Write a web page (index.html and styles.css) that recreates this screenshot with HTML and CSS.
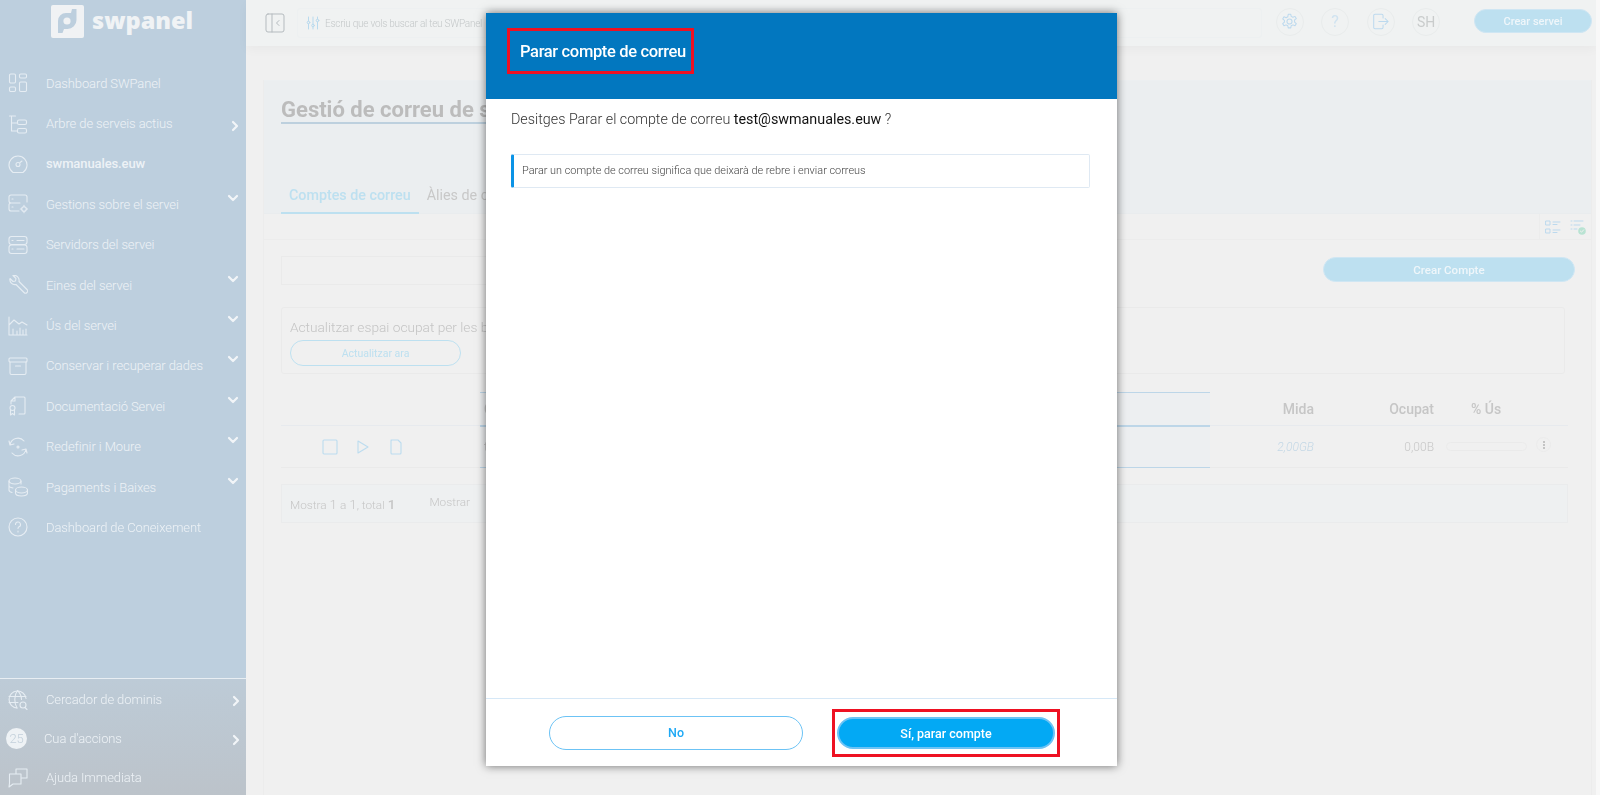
FILE: index.html
```html
<!DOCTYPE html>
<html lang="ca">
<head>
    <meta charset="UTF-8">
    <meta name="viewport" content="width=device-width, initial-scale=1.0">
    <title>SWPanel</title>
    <link rel="stylesheet" href="styles.css">
</head>
<body>
    <div class="page">
        <!-- sidebar -->
        <aside class="sidebar">
            <div class="logo">
                <span class="logo-mark">
                    <svg viewBox="0 0 33 33" width="33" height="33"><path d="M25.500 4v11a9 9 0 0 1-9 9H13l-1.500 4H7V16a8 8 0 0 1 8-8h5l1-4z" fill="#bdcfde"/><circle cx="16" cy="16" r="3.600" fill="#f0f2f4"/></svg>
                </span>
                <span class="logo-text">swpanel</span>
            </div>
            <nav class="side-nav">
                <a class="side-item">
                    <svg class="side-icon" viewBox="0 0 20 20"><rect x="1.500" y="1" width="6" height="9" rx="1.200"/><rect x="11.500" y="1" width="7" height="4" rx="1.200"/><rect x="1.500" y="14" width="6" height="4.500" rx="1.200"/><rect x="11.500" y="9" width="7" height="9.500" rx="1.200"/></svg>
                    <span>Dashboard SWPanel</span>
                </a>
                <a class="side-item">
                    <svg class="side-icon" viewBox="0 0 20 20"><path d="M1.500 2h6M3.500 2v15h5.500M3.500 9h5.500"/><rect x="9.500" y="6" width="9" height="4.500" rx="1.500"/><rect x="9.500" y="14.500" width="9" height="4.500" rx="1.500"/></svg>
                    <span>Arbre de serveis actius</span>
                    <svg class="chev-right" viewBox="0 0 10 12"><path d="M3 2l4 4-4 4"/></svg>
                </a>
                <a class="side-item side-item-current">
                    <svg class="side-icon" viewBox="0 0 20 20"><path d="M5 18.500a9 9 0 1 1 10 0z"/><circle cx="10" cy="10.500" r="2"/><path d="M12 8.500l2-1.500"/></svg>
                    <span>swmanuales.euw</span>
                </a>
                <a class="side-item">
                    <svg class="side-icon" viewBox="0 0 20 20"><path d="M19 8V3a2 2 0 0 0-2-2H3a2 2 0 0 0-2 2v4a2 2 0 0 0 2 2h9M3 9a2 2 0 0 0-2 2v4a2 2 0 0 0 2 2h8M4 5h1M4 13h1"/><circle cx="16" cy="15" r="2.300"/><path d="M16 11.300v1.400M16 17.300v1.400M12.300 15h1.400M18.300 15h1.400"/></svg>
                    <span>Gestions sobre el servei</span>
                    <svg class="chev-down" viewBox="0 0 12 10"><path d="M2 3l4 4 4-4"/></svg>
                </a>
                <a class="side-item">
                    <svg class="side-icon" viewBox="0 0 20 20"><rect x="1" y="1.500" width="18" height="8" rx="2.500"/><rect x="1" y="10" width="18" height="8.500" rx="2.500"/><path d="M4 5.500h1M9 5.500h7M4 14h1M9 14h7"/></svg>
                    <span>Servidors del servei</span>
                </a>
                <a class="side-item">
                    <svg class="side-icon" viewBox="0 0 20 20"><path d="M2 3.500l3 3 2.500-.5.500-2.500-3-3a5 5 0 0 1 6 6l8 8a1.800 1.800 0 0 1-3 3l-8-8a5 5 0 0 1-6-6z"/></svg>
                    <span>Eines del servei</span>
                    <svg class="chev-down" viewBox="0 0 12 10"><path d="M2 3l4 4 4-4"/></svg>
                </a>
                <a class="side-item">
                    <svg class="side-icon" viewBox="0 0 20 20"><path d="M1 1v18h18M1 9l5-5 5 4 3-2 5 3M5 18v-5M9 18v-3M12 18v-6M15 18v-4M18 18v-5"/></svg>
                    <span>Ús del servei</span>
                    <svg class="chev-down" viewBox="0 0 12 10"><path d="M2 3l4 4 4-4"/></svg>
                </a>
                <a class="side-item">
                    <svg class="side-icon" viewBox="0 0 20 20"><rect x="1" y="2" width="18" height="4" rx="1"/><path d="M2 6v11a1.500 1.500 0 0 0 1.500 1.500h13A1.500 1.500 0 0 0 18 17V6M7.500 10h5"/></svg>
                    <span>Conservar i recuperar dades</span>
                    <svg class="chev-down" viewBox="0 0 12 10"><path d="M2 3l4 4 4-4"/></svg>
                </a>
                <a class="side-item">
                    <svg class="side-icon" viewBox="0 0 20 20"><path d="M3 8V5l4-4h9a1 1 0 0 1 1 1v15a1 1 0 0 1-1 1h-5M7 1v4H3"/><circle cx="4.500" cy="12" r="2.500"/><path d="M2.500 14v5l2-1.500 2 1.500v-5"/></svg>
                    <span>Documentació Servei</span>
                    <svg class="chev-down" viewBox="0 0 12 10"><path d="M2 3l4 4 4-4"/></svg>
                </a>
                <a class="side-item">
                    <svg class="side-icon" viewBox="0 0 20 20"><path d="M2 8a8 8 0 0 1 14-4M18 12a8 8 0 0 1-14 4M1 4l1 4 4-1M19 16l-1-4-4 1"/><circle cx="10" cy="10" r="1"/></svg>
                    <span>Redefinir i Moure</span>
                    <svg class="chev-down" viewBox="0 0 12 10"><path d="M2 3l4 4 4-4"/></svg>
                </a>
                <a class="side-item">
                    <svg class="side-icon" viewBox="0 0 20 20"><ellipse cx="7" cy="4" rx="6" ry="3"/><path d="M1 4v9c0 1 1 2 3 2.500M13 4v3M1 8.500c0 1 1 2 4 2.500"/><ellipse cx="13.500" cy="13" rx="6" ry="3"/><path d="M7.500 13v3c0 1.700 2.700 3 6 3s6-1.300 6-3v-3"/></svg>
                    <span>Pagaments i Baixes</span>
                    <svg class="chev-down" viewBox="0 0 12 10"><path d="M2 3l4 4 4-4"/></svg>
                </a>
                <a class="side-item">
                    <svg class="side-icon" viewBox="0 0 20 20"><circle cx="10" cy="10" r="9"/><path d="M7.500 7.500a2.500 2.500 0 1 1 3.500 2.300c-.7.400-1 .8-1 1.700M10 14v1"/></svg>
                    <span>Dashboard de Coneixement</span>
                </a>
            </nav>
            <div class="side-foot">
                <a class="side-item foot-item">
                    <svg class="side-icon" viewBox="0 0 20 20"><path d="M18 8.500A8.500 8.500 0 1 0 9 18"/><path d="M1 6.500h17M1 12.500h9M9.500.5C6 5 6 13 9 18M9.500.5c3 3 4 6.500 4 9"/><circle cx="15" cy="15" r="3"/><path d="M17 17.500l2 2"/></svg>
                    <span>Cercador de dominis</span>
                    <svg class="chev-right" viewBox="0 0 10 12"><path d="M3 2l4 4-4 4"/></svg>
                </a>
                <a class="side-item foot-item foot-badge-item">
                    <span class="badge">25</span>
                    <span>Cua d'accions</span>
                    <svg class="chev-right" viewBox="0 0 10 12"><path d="M3 2l4 4-4 4"/></svg>
                </a>
                <a class="side-item foot-item">
                    <svg class="side-icon" viewBox="0 0 20 20"><path d="M8 6V1h11v9h-5M13 6H1.500v9L1 19l4-3h8z"/></svg>
                    <span>Ajuda Immediata</span>
                </a>
            </div>
        </aside>

        <div class="main">
            <!-- top bar -->
            <header class="topbar">
                <button class="toggle">
                    <svg viewBox="0 0 20 20" width="20" height="20"><rect x="1" y="1" width="18" height="18" rx="2"/><path d="M7 1v18M14 7.500l-2.500 2.500 2.500 2.500"/></svg>
                </button>
                <div class="search">
                    <svg viewBox="0 0 14 14" width="14" height="14"><path d="M2.500 1v4M2.500 8v5M7 1v7M7 11v2M11.500 1v2M11.500 6v7"/><circle cx="2.500" cy="6.500" r="1.300"/><circle cx="7" cy="9.500" r="1.300"/><circle cx="11.500" cy="4.500" r="1.300"/></svg>
                    <span>Escriu que vols buscar al teu SWPanel</span>
                </div>
                <div class="top-actions">
                    <span class="round">
                        <svg viewBox="0 0 20 20" width="17" height="17"><path d="M8.500 1.500h3l.5 2.500 2 1 2.500-1 1.500 2.500-2 1.700v2.600l2 1.700-1.500 2.500-2.500-1-2 1-.5 2.500h-3l-.5-2.500-2-1-2.500 1-1.500-2.500 2-1.700V8.700l-2-1.700L3.500 4.500l2.500 1 2-1z"/><circle cx="10" cy="10" r="3"/></svg>
                    </span>
                    <span class="round round-q">?</span>
                    <span class="round">
                        <svg viewBox="0 0 20 20" width="17" height="17"><path d="M13 6V3a1.500 1.500 0 0 0-1.500-1.500h-8A1.500 1.500 0 0 0 2 3v14a1.500 1.500 0 0 0 1.500 1.500h8A1.500 1.500 0 0 0 13 17v-3M8 10h11M15.500 6.500L19 10l-3.500 3.500"/></svg>
                    </span>
                    <span class="round round-sh">SH</span>
                </div>
                <button class="btn-fill btn-top">Crear servei</button>
            </header>

            <!-- content -->
            <section class="panel">
                <div class="panel-head">
                    <h1 class="panel-title">Gestió de correu de s</h1>
                    <div class="tabs">
                        <span class="tab tab-on">Comptes de correu</span>
                        <span class="tab">Àlies de c</span>
                    </div>
                </div>
                <div class="view-strip">
                    <span class="view-btn">
                        <svg viewBox="0 0 16 16" width="16" height="16"><rect x="1" y="2" width="4" height="4"/><rect x="1" y="10" width="4" height="4"/><path d="M8 3h7M8 5.500h4M8 11h7M8 13.500h4"/></svg>
                    </span>
                    <span class="view-btn">
                        <svg viewBox="0 0 16 16" width="16" height="16"><path d="M1 2h1M4 2h9M1 6h1M4 6h6M1 10h1M4 10h3"/><circle cx="12" cy="12" r="3.800" class="view-ok"/><path d="M10.300 12l1.200 1.200 2.200-2.400" class="view-tick"/></svg>
                    </span>
                </div>
                <div class="panel-body">
                    <div class="filter-row">
                        <div class="filter-input"></div>
                        <button class="btn-fill btn-new">Crear Compte</button>
                    </div>
                    <div class="update-box">
                        <p>Actualitzar espai ocupat per les b</p>
                        <button class="btn-line">Actualitzar ara</button>
                    </div>
                    <div class="table">
                        <div class="tr th">
                            <span class="td td-actions"></span>
                            <span class="td td-main">C</span>
                            <span class="td td-size">Mida</span>
                            <span class="td td-used">Ocupat</span>
                            <span class="td td-pct">% Ús</span>
                        </div>
                        <div class="tr row">
                            <span class="td td-actions">
                                <svg viewBox="0 0 16 16" width="16" height="16"><rect x="1" y="1" width="14" height="14" rx="1"/></svg>
                                <svg viewBox="0 0 16 16" width="16" height="16"><path d="M3 2l10 6-10 6z"/></svg>
                                <svg viewBox="0 0 16 16" width="16" height="16"><path d="M3 1h7l3 3v10a1 1 0 0 1-1 1H4a1 1 0 0 1-1-1V2a1 1 0 0 1 1-1z"/></svg>
                            </span>
                            <span class="td td-main">t</span>
                            <span class="td td-size td-quota">2,00GB</span>
                            <span class="td td-used td-light">0,00B</span>
                            <span class="td td-pct"><span class="bar"></span></span>
                            <span class="kebab"></span>
                        </div>
                    </div>
                    <div class="pager">
                        <span class="pager-count">Mostra <span class="pager-num">1</span> a <span class="pager-num">1</span>, total <b class="pager-num">1</b></span>
                        <span class="pager-show">Mostrar</span>
                    </div>
                </div>
            </section>
        </div>
        <div class="edge"></div>
    </div>

    <!-- popup -->
    <div class="modal">
        <div class="modal-head">
            <h2 class="modal-title">Parar compte de correu</h2>
        </div>
        <div class="modal-body">
            <p class="modal-question">Desitges Parar el compte de correu <span class="modal-mail">test@swmanuales.euw</span> ?</p>
            <p class="modal-note">Parar un compte de correu significa que deixarà de rebre i enviar correus</p>
        </div>
        <div class="modal-foot">
            <button class="modal-no">No</button>
            <span class="mark-box"><button class="modal-yes">Sí, parar compte</button></span>
        </div>
    </div>
</body>
</html>
```

FILE: styles.css
```css
* {
    box-sizing: border-box;
}

html, body {
    margin: 0;
    height: 795px;
    overflow: hidden;
}

body {
    font-family: "Roboto", "Liberation Sans", sans-serif;
    background: #f0f0f0;
}

svg {
    fill: none;
    stroke-linecap: round;
    stroke-linejoin: round;
}

button {
    font-family: inherit;
    cursor: pointer;
}

.page {
    display: flex;
    height: 795px;
    filter: blur(0.5px);
}

/* sidebar */
.sidebar {
    width: 246px;
    flex: none;
    display: flex;
    flex-direction: column;
    background: #bdcfde;
}

.logo {
    height: 63px;
    padding: 5px 0 0 51px;
    display: flex;
    align-items: flex-start;
    gap: 8px;
}

.logo-mark {
    width: 33px;
    height: 33px;
    border-radius: 2px;
    background: #f0f2f4;
    display: block;
}

.logo-text {
    font-family: "Open Sans", "Liberation Sans", sans-serif;
    font-weight: 800;
    font-size: 23.500px;
    line-height: 30px;
    color: #f0f3f5;
}

.side-item {
    height: 40.4px;
    display: flex;
    align-items: center;
    padding: 0 8px;
    font-size: 13px;
    letter-spacing: -0.1px;
    font-weight: 300;
    color: #edf2f6;
    white-space: nowrap;
}

.side-icon {
    width: 20px;
    height: 20px;
    flex: none;
    margin-right: 18px;
    stroke: #e6edf3;
    stroke-width: 1.100;
}

.side-item-current {
    font-weight: 500;
}

.chev-right {
    width: 10px;
    height: 12px;
    margin: 4px -2px 0 auto;
    stroke: #f2f5f8;
    stroke-width: 2.200;
}

.chev-down {
    width: 12px;
    height: 10px;
    margin: 0 -1px 13px auto;
    stroke: #f2f5f8;
    stroke-width: 2.200;
}

.side-foot {
    margin-top: auto;
    height: 117px;
    padding-top: 1px;
    border-top: 1px solid #e8eef3;
    background: linear-gradient(#bdcbd7, #bcc3ca);
}

.foot-item {
    height: 39px;
}

.foot-item .chev-right {
    margin: 3px -3px 0 auto;
}

.foot-badge-item {
    padding-left: 6px;
}

.badge {
    width: 21px;
    height: 21px;
    margin-right: 17px;
    border-radius: 50%;
    background: #eef2f5;
    color: #c3d0db;
    font-size: 13px;
    line-height: 21px;
    text-align: center;
}

/* top bar */
.main {
    flex: 1;
    min-width: 0;
    display: flex;
    flex-direction: column;
}

.topbar {
    height: 46px;
    flex: none;
    display: flex;
    align-items: center;
    padding: 0 4px 0 19px;
    background: #f0f2f2;
    box-shadow: 0 4px 10px rgba(0, 0, 0, 0.03);
}

.toggle {
    width: 20px;
    height: 20px;
    padding: 0;
    border: none;
    background: none;
    margin: 0 12px 0 0;
}

.toggle svg {
    stroke: #b5bbbf;
    stroke-width: 1;
}

.search {
    width: 965px;
    height: 30px;
    padding-left: 8px;
    display: flex;
    align-items: center;
    gap: 5px;
    border: 1px solid #edf0f1;
    border-radius: 3px;
    font-size: 10px;
    letter-spacing: -0.25px;
    font-weight: 300;
    color: #c4c8c9;
    white-space: nowrap;
}

.search svg {
    stroke: #b9daee;
    stroke-width: 1;
}

.top-actions {
    display: flex;
    gap: 17.500px;
    margin-left: 14px;
    margin-top: -3px;
}

.round {
    width: 28px;
    height: 28px;
    border: 1px solid #e9ecec;
    border-radius: 50%;
    display: flex;
    align-items: center;
    justify-content: center;
    font-size: 14px;
    color: #c9cccc;
}

.round svg {
    stroke: #bcd9ee;
    stroke-width: 1.200;
}

.round-q {
    font-size: 16px;
    color: #d0e3f0;
}

.btn-fill {
    border: 1px solid #cfe6f3;
    border-radius: 13px;
    background: #bde0f0;
    color: #eff6fa;
    font-weight: 500;
}

.btn-top {
    width: 118px;
    height: 24px;
    margin-left: 34px;
    margin-top: -4px;
    padding: 0;
    font-size: 11px;
}

/* content */
.panel {
    flex: 1;
    margin: 34px 4px 0 17px;
    border-left: 1px solid #ececec;
    border-right: 1px solid #ececec;
}

.panel-head {
    height: 134px;
    padding-left: 17px;
    border-top: 1px solid #eceff1;
    background: #ebeef0;
    border-bottom: 1px solid #e9ecee;
}

.panel-title {
    width: 400px;
    margin: 14px 0 0;
    height: 29px;
    font-size: 22px;
    line-height: 29px;
    font-weight: 700;
    color: #bcbcbc;
    border-bottom: 2px solid #bdd0de;
    white-space: nowrap;
}

.tabs {
    display: flex;
    margin-top: 51px;
}

.tab {
    height: 39px;
    padding: 12px 8px 0;
    font-size: 14.300px;
    font-weight: 400;
    color: #c8c8c8;
}

.tab-on {
    font-weight: 500;
    color: #bde0f0;
    border-bottom: 2px solid #bde0f0;
}

.view-strip {
    height: 26px;
    display: flex;
    justify-content: flex-end;
    border-bottom: 1px solid #ececec;
}

.view-btn {
    width: 26px;
    display: flex;
    align-items: center;
    justify-content: center;
}

.view-btn:first-child {
    border-left: 1px solid #ececec;
}

.view-btn svg {
    stroke: #bcd9ee;
    stroke-width: 1;
}

.view-btn .view-ok {
    fill: #b9e3d3;
    stroke: none;
}

.view-btn .view-tick {
    stroke: #f0f0f0;
}

.panel-body {
    padding: 16px 26px 0 17px;
}

.filter-row {
    display: flex;
    justify-content: space-between;
    margin-right: -12px;
}

.filter-input {
    width: 600px;
    height: 29px;
    border: 1px solid #eaeaea;
}

.btn-new {
    width: 252px;
    height: 25px;
    margin: 1px 2px 0 0;
    padding: 0;
    font-size: 11.500px;
}

.update-box {
    height: 67px;
    margin-top: 22px;
    padding: 11px 8px 0;
    border: 1px solid #eaeaea;
    border-radius: 3px;
}

.update-box p {
    margin: 0 0 4px;
    font-size: 13.700px;
    line-height: 17px;
    font-weight: 300;
    color: #c4c4c4;
}

.btn-line {
    width: 171px;
    height: 26px;
    padding: 0;
    border: 1px solid #bde0f0;
    border-radius: 13px;
    background: none;
    color: #bde0f0;
    font-size: 10.500px;
}

.table {
    margin: 18px -3px 0 0;
}

.tr {
    display: flex;
    align-items: center;
}

.th {
    height: 34px;
    border-bottom: 1px solid #e7eaee;
    font-size: 14px;
    font-weight: 500;
    color: #c6c6c6;
}

.row {
    height: 42px;
    border-bottom: 1px solid #eaeaea;
    font-size: 12px;
    color: #c8c8c8;
}

.td-actions {
    width: 199px;
    height: 100%;
    display: flex;
    align-items: center;
    padding: 0 0 0 41px;
    gap: 17px;
}

.td-actions svg {
    stroke: #bcdcef;
    stroke-width: 1.100;
}

.td-main {
    width: 730px;
    height: calc(100% + 1px);
    padding-left: 4px;
    display: flex;
    align-items: center;
    background: #edeff1;
    border-top: 1px solid #bdd6e8;
    border-bottom: 1px solid #bdd6e8;
    align-self: flex-start;
}

.td-size {
    width: 104px;
    text-align: right;
}

.td-quota {
    font-style: italic;
    font-weight: 300;
    color: #c4d8e6;
}

.td-used {
    width: 120px;
    text-align: right;
}

.td-light {
    font-weight: 300;
}

.td-pct {
    width: 102px;
    padding-left: 12px;
    display: flex;
    align-items: center;
}

.th .td-pct {
    padding-left: 37px;
    width: 108px;
    white-space: nowrap;
}

.bar {
    flex: none;
    width: 81px;
    height: 9px;
    border: 1px solid #eaeaea;
    border-radius: 5px;
}

.kebab {
    width: 15px;
    height: 15px;
    margin-top: -5px;
    border: 1px solid #eaeaea;
    border-radius: 50%;
    position: relative;
}

.kebab::after {
    content: "";
    position: absolute;
    left: 5.500px;
    top: 3px;
    width: 2px;
    height: 2px;
    background: #c4c4c4;
    box-shadow: 0 3px 0 #c4c4c4, 0 6px 0 #c4c4c4;
}

.pager {
    height: 39px;
    margin: 16px -3px 0 0;
    padding-left: 8px;
    display: flex;
    align-items: center;
    gap: 34px;
    border: 1px solid #eaebec;
    background: #eef0f1;
    font-size: 11.800px;
    font-weight: 300;
    color: #c6c6c6;
}

.pager-num {
    font-size: 13.500px;
}

.pager b {
    font-weight: 500;
}

.pager-show {
    margin-top: -3px;
}

.edge {
    width: 4px;
    flex: none;
    background: #f8f8f8;
}

/* popup */
.modal {
    position: fixed;
    top: 13px;
    left: 486px;
    width: 631px;
    height: 753px;
    display: flex;
    flex-direction: column;
    background: white;
    box-shadow: 0 0 9px rgba(0, 0, 0, 0.55);
}

.modal-head {
    height: 86px;
    flex: none;
    padding: 15px 0 0 21px;
    background: #0277bf;
}

.modal-title {
    display: inline-block;
    width: 187px;
    height: 46px;
    margin: 0;
    padding: 1px 0 0 10px;
    border: 3px solid #ee1122;
    font-size: 16.500px;
    letter-spacing: -0.35px;
    line-height: 39px;
    font-weight: 500;
    color: white;
    white-space: nowrap;
}

.modal-body {
    flex: 1;
    padding: 0 27px 0 25px;
}

.modal-question {
    margin: 0;
    height: 55px;
    padding-top: 10px;
    font-size: 14.300px;
    line-height: 20px;
    font-weight: 300;
    color: #333;
}

.modal-mail {
    font-weight: 400;
    color: #111;
}

.modal-note {
    height: 34px;
    margin: 0;
    padding-left: 8px;
    border: 1px solid #dfe9f3;
    border-left: 3px solid #0b93e6;
    border-radius: 2px;
    font-size: 10.900px;
    line-height: 31px;
    color: #444;
    font-weight: 300;
}

.modal-foot {
    height: 68px;
    flex: none;
    padding: 11px 0 0 63px;
    display: flex;
    align-items: flex-start;
    border-top: 1px solid #d6e8f7;
}

.modal-no {
    width: 254px;
    height: 34px;
    margin-top: 6px;
    padding: 0 0 2px;
    border: 1px solid #6cc3f5;
    border-radius: 17px;
    background: white;
    color: #1fa9f5;
    font-size: 12.500px;
    font-weight: 500;
}

.mark-box {
    display: flex;
    align-items: center;
    justify-content: flex-start;
    width: 228px;
    height: 48px;
    margin: -1px 0 0 29px;
    padding-left: 2px;
    border: 3px solid #ee1122;
}

.modal-yes {
    width: 218px;
    height: 32px;
    padding: 0;
    border: 2px solid #6cc3f5;
    border-radius: 16px;
    background: #03a9f4;
    color: white;
    font-size: 12.500px;
    font-weight: 500;
}
```
